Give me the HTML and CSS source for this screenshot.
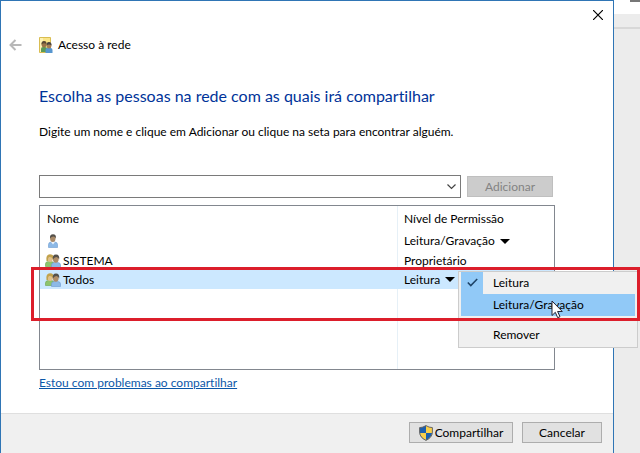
FILE: index.html
```html
<!DOCTYPE html>
<html lang="pt-BR">
<head>
    <meta charset="UTF-8">
    <meta name="viewport" content="width=device-width, initial-scale=1.0">
    <title>Acesso à rede</title>
    <link rel="stylesheet" href="styles.css">
</head>
<body>
    <svg class="symbols" aria-hidden="true">
        <symbol id="person" viewBox="0 0 12 14">
            <path d="M1.500 13.500v-3q0-2.500 3-2.500h3q3 0 3 2.500v3z" fill="#8db9e6" stroke="#6c9bd0" stroke-width=".6"/>
            <path d="M4 8l2 2.500 2-2.500z" fill="#eef5fc"/>
            <ellipse cx="5.800" cy="4.500" rx="2.700" ry="3.600" fill="#a98a68"/>
            <path d="M3 4.500q-.4-4.200 3-4.200t2.900 4.200q-.8-2-2.600-2t-3.300 2z" fill="#54504a"/>
        </symbol>
        <symbol id="group" viewBox="0 0 16 14">
            <path d="M.5 12.500v-2.500q0-2.500 3-2.500h2.500q3 0 3 2.500v2.500z" fill="#8ec46c" stroke="#6ba34b" stroke-width=".6"/>
            <ellipse cx="5" cy="4.500" rx="2.800" ry="3.500" fill="#dfc08a"/>
            <path d="M1.500 7q-1-6.700 3.500-6.700t3.200 4.700q-1.700-2.500-4.200-2-1.400 1-1 4z" fill="#c2a24c"/>
            <path d="M6.500 13.500v-2.500q0-2.500 3-2.500h3q3 0 3 2.500v2.500z" fill="#8db9e6" stroke="#6c9bd0" stroke-width=".6"/>
            <ellipse cx="10.800" cy="5" rx="2.900" ry="3.700" fill="#b08d67"/>
            <path d="M7.800 5.500q-.6-4.900 3.200-4.900t3.200 4.900q-.8-2.500-2.900-2.500t-3.500 2.500z" fill="#54504a"/>
        </symbol>
    </svg>

    <main class="dialog">
        <header class="titlebar">
            <button class="back" type="button" aria-label="Voltar" disabled>
                <svg width="13" height="12" viewBox="0 0 13 12" fill="none" stroke="#b8b8b8" stroke-width="2"><path d="M12.500 6H1.500M6.500 1L1.500 6l5 5"/></svg>
            </button>
            <svg class="folder" width="14" height="17" viewBox="0 0 14 17" aria-hidden="true">
                <path d="M.5.5h11v15H.5z" fill="#fae588" stroke="#d9bd52"/>
                <path d="M1 1h3v14H1z" fill="#fdf2b4"/>
                <path d="M2 15v-3q0-2 2-2h2q2 0 2 2v3z" fill="#5b9a58"/>
                <ellipse cx="5" cy="7.500" rx="2.400" ry="2.900" fill="#9a7448"/>
                <path d="M2.500 7.500q-.3-3.500 2.500-3.500t2.500 3q-2.500-1.500-5 .5z" fill="#5b4934"/>
                <path d="M6.500 16v-3q0-2 2-2h3q2 0 2 2v3z" fill="#5796cf"/>
                <ellipse cx="10" cy="8.500" rx="2.400" ry="2.900" fill="#a67e55"/>
                <path d="M7.500 8.500q-.3-3.500 2.500-3.500t2.500 3.500q-2.500-2-5 0z" fill="#4a4540"/>
            </svg>
            <span class="caption">Acesso à rede</span>
            <button class="close" type="button" aria-label="Fechar">
                <svg width="10" height="10" viewBox="0 0 10 10" fill="none" stroke="#000" stroke-width="1.200"><path d="M0 0l10 10M10 0L0 10"/></svg>
            </button>
        </header>

        <section class="content">
            <h1>Escolha as pessoas na rede com as quais irá compartilhar</h1>
            <label class="hint" for="name">Digite um nome e clique em Adicionar ou clique na seta para encontrar alguém.</label>

            <div class="add-row">
                <div class="combo">
                    <input type="text" id="name">
                    <button type="button" aria-label="Mostrar nomes">
                        <svg width="9" height="6" viewBox="0 0 9 6" fill="none" stroke="#444" stroke-width="1.200"><path d="M.5.5l4 4 4-4"/></svg>
                    </button>
                </div>
                <button class="add" type="button" disabled>Adicionar</button>
            </div>

            <div class="list">
                <table>
                    <thead>
                        <tr><th>Nome</th><th class="level">Nível de Permissão</th></tr>
                    </thead>
                    <tbody>
                        <tr class="owner">
                            <td><div class="name"><svg width="16" height="14" aria-hidden="true"><use href="#person"/></svg></div></td>
                            <td class="level"><button class="permission" type="button" aria-haspopup="menu">Leitura/Gravação <span class="arrow"></span></button></td>
                        </tr>
                        <tr>
                            <td><div class="name"><svg width="16" height="14" aria-hidden="true"><use href="#group"/></svg>SISTEMA</div></td>
                            <td class="level">Proprietário</td>
                        </tr>
                        <tr class="selected">
                            <td><div class="name"><svg width="16" height="14" aria-hidden="true"><use href="#group"/></svg>Todos</div></td>
                            <td class="level">
                                <div class="dropdown">
                                    <button class="permission" type="button" aria-haspopup="menu" aria-expanded="true">Leitura <span class="arrow"></span></button>
                                    <div class="menu" role="menu">
                                        <button class="item checked" type="button" role="menuitemradio" aria-checked="true">
                                            <span class="check"><svg width="11" height="9" viewBox="0 0 11 9" fill="none" stroke="#1f4468" stroke-width="1.600"><path d="M.8 4.500l3 3L10.200 1"/></svg></span>Leitura
                                        </button>
                                        <button class="item active" type="button" role="menuitemradio" aria-checked="false"><span class="check"></span>Leitura/Gravação</button>
                                        <hr>
                                        <button class="item" type="button" role="menuitem"><span class="check"></span>Remover</button>
                                        <svg class="cursor" width="13" height="19" viewBox="0 0 13 19" aria-hidden="true"><path d="M1 1v14.500l3.300-3.200 2.400 5.400 2.300-1-2.400-5.200h4.700z" fill="#fff" stroke="#223" stroke-width="1"/></svg>
                                    </div>
                                </div>
                            </td>
                        </tr>
                    </tbody>
                </table>
                <div class="highlight"></div>
            </div>

            <a class="help" href="#">Estou com problemas ao compartilhar</a>
        </section>

        <footer class="actions">
            <button class="share" type="button">
                <svg width="14" height="16" viewBox="0 0 14 16" aria-hidden="true">
                    <path d="M7 .5Q4 2.500.6 2.500V7q0 5.500 6.400 8.500z" fill="#1c5fae"/>
                    <path d="M7 .5q3 2 6.400 2V7q0 5.500-6.400 8.500z" fill="#f8cf4a"/>
                    <path d="M.8 8H7v7.300Q1.500 12.500.8 8z" fill="#f8cf4a"/>
                    <path d="M13.200 8H7v7.300Q12.500 12.500 13.200 8z" fill="#1c5fae"/>
                    <path d="M7 .6q3 2 6.400 2V7q0 5.500-6.400 8.400Q.6 12.500.6 7V2.600Q4 2.600 7 .6z" fill="none" stroke="#666" stroke-width="1"/>
                </svg>Compartilhar
            </button>
            <button type="button">Cancelar</button>
        </footer>
    </main>

    <aside class="backdrop">
        <div class="tab"></div>
        <div class="toolbar"></div>
    </aside>
</body>
</html>
```
FILE: styles.css
```css
* {
    box-sizing: border-box;
}

body {
    margin: 0;
    display: flex;
    min-height: 100vh;
    overflow: hidden;
    background-color: #ececec;
    color: #000;
    font: 12px/16px Lato, "Open Sans", sans-serif;
    font-variant-ligatures: none;
}

button {
    padding: 0;
    border: none;
    background: none;
    color: inherit;
    font: inherit;
    font-variant-ligatures: none;
}

svg {
    flex: none;
}

.symbols {
    position: absolute;
    width: 0;
    height: 0;
}

.dialog {
    flex: 1;
    display: flex;
    flex-direction: column;
    border: 1px solid #2f75b5;
    border-bottom: none;
    background-color: #fff;
}

.backdrop {
    width: 26px;
}

.tab {
    height: 14px;
    background: linear-gradient(#777, #777) right top / 10px 2px no-repeat #fff;
}

.toolbar {
    height: 15px;
    border-bottom: 2px solid #d8d8d8;
}

/* Title bar */
.titlebar {
    display: flex;
    align-items: center;
    height: 62px;
    padding: 26px 10px 0 8px;
}

.back {
    display: flex;
    width: 30px;
}

.caption {
    margin-left: 5px;
}

.close {
    display: flex;
    align-self: flex-start;
    margin: -17px 0 0 auto;
}

/* Content */
.content {
    flex: 1;
    padding: 22px 58px 0 38px;
}

h1 {
    margin: 0;
    color: #003399;
    font-size: 16px;
    font-weight: normal;
    line-height: 22px;
}

.hint {
    display: block;
    margin-top: 17px;
}

.add-row {
    display: flex;
    gap: 6px;
    margin-top: 35px;
}

.combo {
    flex: 1;
    display: flex;
    height: 23px;
    border: 1px solid #7a7a7a;
}

.combo input {
    flex: 1;
    min-width: 0;
    padding: 0 4px;
    border: none;
    outline: none;
    font: inherit;
}

.combo button {
    display: flex;
    align-items: center;
    justify-content: center;
    width: 17px;
}

.add {
    width: 86px;
    margin: 1px 2px 1px 0;
    border: 1px solid #bfbfbf;
    background-color: #ccc;
    color: #838383;
}

/* Permission list */
.list {
    position: relative;
    min-height: 165px;
    margin-top: 7px;
    border: 1px solid #82878f;
    background: linear-gradient(#e6f0f7, #e6f0f7) calc(100% - 156px) 0 / 1px 100% no-repeat;
}

table {
    width: 100%;
    border-collapse: collapse;
}

th,
td {
    height: 19px;
    padding: 0 0 0 5px;
    font-weight: normal;
    text-align: left;
}

th {
    height: 25px;
    padding-left: 7px;
}

.owner td {
    height: 20px;
}

.level {
    width: 156px;
    padding-left: 6px;
}

.name {
    display: flex;
    align-items: center;
    gap: 2px;
}

.selected {
    background-color: #cce8ff;
}

.permission {
    display: flex;
    align-items: center;
    gap: 5px;
}

.arrow {
    border: 5px solid transparent;
    border-top-color: #000;
    border-bottom: none;
}

.dropdown {
    position: relative;
}

.menu {
    position: absolute;
    top: -1px;
    left: 54px;
    width: 180px;
    padding: 0 2px 1px;
    border: 1px solid #ccc;
    background-color: #f0f0f0;
}

.item {
    display: flex;
    align-items: center;
    gap: 10px;
    width: 100%;
    height: 22px;
}

.item.active {
    background-color: #91c9f7;
}

.check {
    display: flex;
    align-items: center;
    justify-content: center;
    width: 22px;
    height: 22px;
}

.checked .check {
    background-color: #91c9f7;
}

.menu hr {
    margin: 4px 0 3px;
    border: none;
    border-top: 1px solid #d7d7d7;
}

.cursor {
    position: absolute;
    top: 28px;
    left: 92px;
}

.highlight {
    position: absolute;
    top: 61px;
    right: -86px;
    left: -9px;
    height: 54px;
    border: 3px solid #dc1e2b;
    pointer-events: none;
}

.help {
    display: inline-block;
    margin-top: 5px;
    color: #0b57a8;
}

/* Footer */
.actions {
    display: flex;
    justify-content: flex-end;
    gap: 9px;
    padding: 8px 11px 10px;
    border-top: 1px solid #dfdfdf;
    background-color: #f0f0f0;
}

.actions button {
    display: flex;
    align-items: center;
    justify-content: center;
    gap: 2px;
    width: 80px;
    height: 21px;
    border: 1px solid #adadad;
    background-color: #e1e1e1;
}

.actions .share {
    width: 104px;
}
```
